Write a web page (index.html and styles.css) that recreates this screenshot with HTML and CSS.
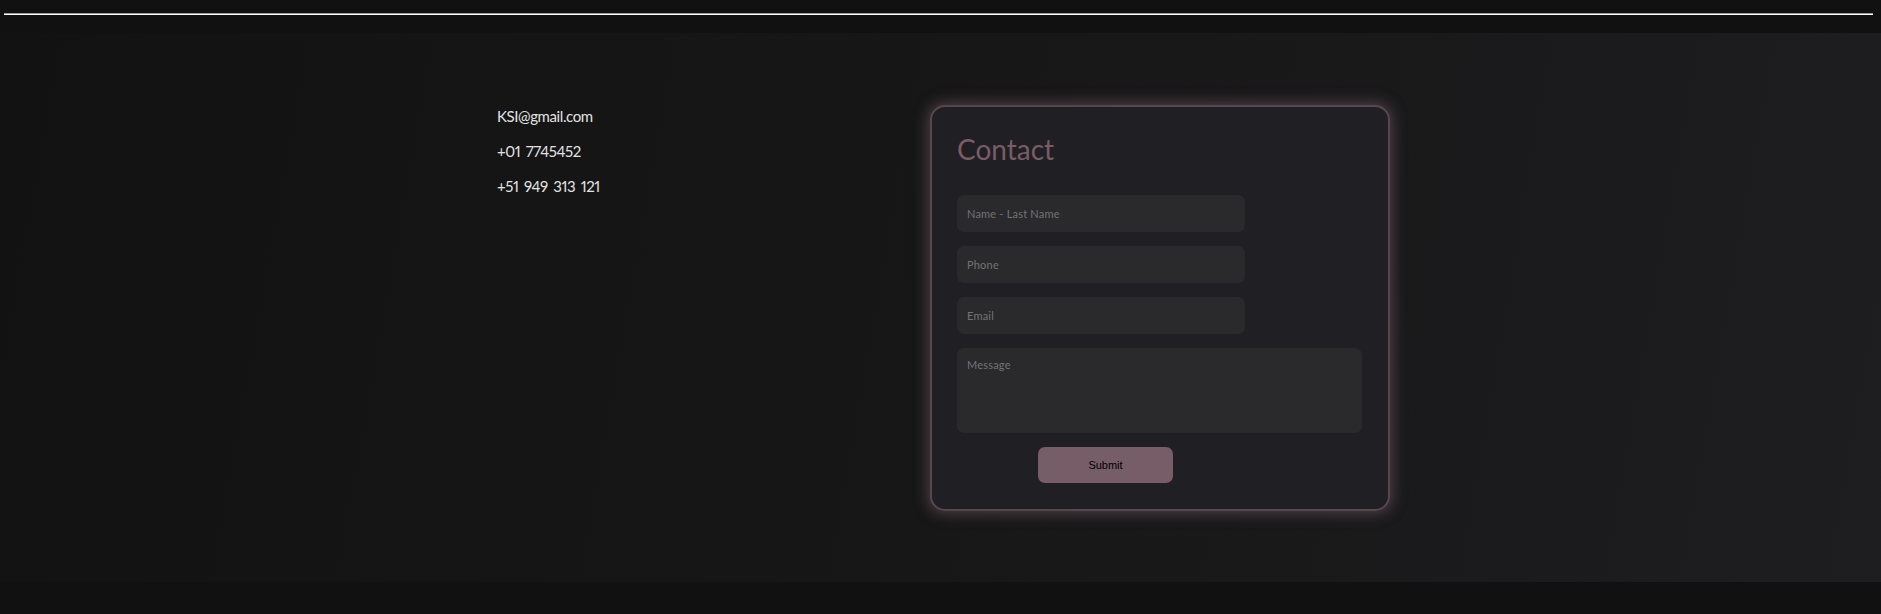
FILE: index.html
```html
<!DOCTYPE html>
<html lang="en">
<head>
<meta charset="utf-8">
<title>Contact</title>
<link rel="stylesheet" href="styles.css">
</head>
<body>
<header class="topbar">
  <div class="rule"></div>
</header>
<section class="contact-section">
  <div class="info">
    <p class="info-line">KSI@gmail.com</p>
    <p class="info-line">+01 7745452</p>
    <p class="info-line">+51 949 313 121</p>
  </div>
  <form class="card">
    <h2 class="card-title">Contact</h2>
    <input class="field" type="text" placeholder="Name - Last Name">
    <input class="field" type="text" placeholder="Phone">
    <input class="field" type="text" placeholder="Email">
    <textarea class="field message" placeholder="Message"></textarea>
    <button class="submit" type="button">Submit</button>
  </form>
</section>
</body>
</html>
```
FILE: styles.css
```css
html, body {
  margin: 0;
  padding: 0;
  background: #111111;
  font-family: "Lato", "Noto Sans", sans-serif;
  height: 614px;
  overflow: hidden;
}

.topbar {
  height: 33px;
  padding: 13px 8px 0 4px;
  box-sizing: border-box;
}

.rule {
  height: 1px;
  background: #ffffff;
  border-top: 1px solid #9a9a9a;
}

.contact-section {
  height: 549px;
  box-sizing: border-box;
  display: flex;
  align-items: flex-start;
  padding: 72px 0 0 497px;
  background: linear-gradient(100deg, #121212 0%, #161616 40%, #19191a 70%, #1e1e21 100%);
}

.info {
  width: 433px;
  padding-top: 1px;
}

.info-line {
  margin: 0 0 15px 0;
  font-size: 15px;
  line-height: 20px;
  color: #e2e2e2;
  letter-spacing: -0.4px;
  word-spacing: 2px;
  font-variant-numeric: proportional-nums;
}

.card {
  width: 460px;
  box-sizing: border-box;
  padding: 25px 25px 26px 25px;
  background: #201f24;
  border: 2px solid #54474d;
  border-radius: 15px;
  box-shadow: 0 0 14px 3px rgba(110, 84, 94, 0.6);
  display: flex;
  flex-direction: column;
  align-items: flex-start;
}

.card-title {
  margin: 0 0 29px 0;
  font-size: 28px;
  line-height: 34px;
  font-weight: 400;
  color: #7b5c65;
}

.field {
  width: 288px;
  height: 37px;
  box-sizing: border-box;
  margin: 0 0 14px 0;
  padding: 0 10px;
  border: none;
  border-radius: 7px;
  background: #2a2a2c;
  font-family: "Lato", "Noto Sans", sans-serif;
  font-size: 11px;
  letter-spacing: 0.2px;
  color: #cfcfcf;
  outline: none;
}

.field::placeholder {
  color: #737378;
}

.message {
  width: 405px;
  height: 85px;
  padding: 10px 10px;
  resize: none;
}

.submit {
  margin-left: 81px;
  width: 135px;
  height: 36px;
  border: none;
  border-radius: 7px;
  background: #765d67;
  color: #000000;
  font-family: "Liberation Sans", Arial, sans-serif;
  font-size: 11px;
}
```
